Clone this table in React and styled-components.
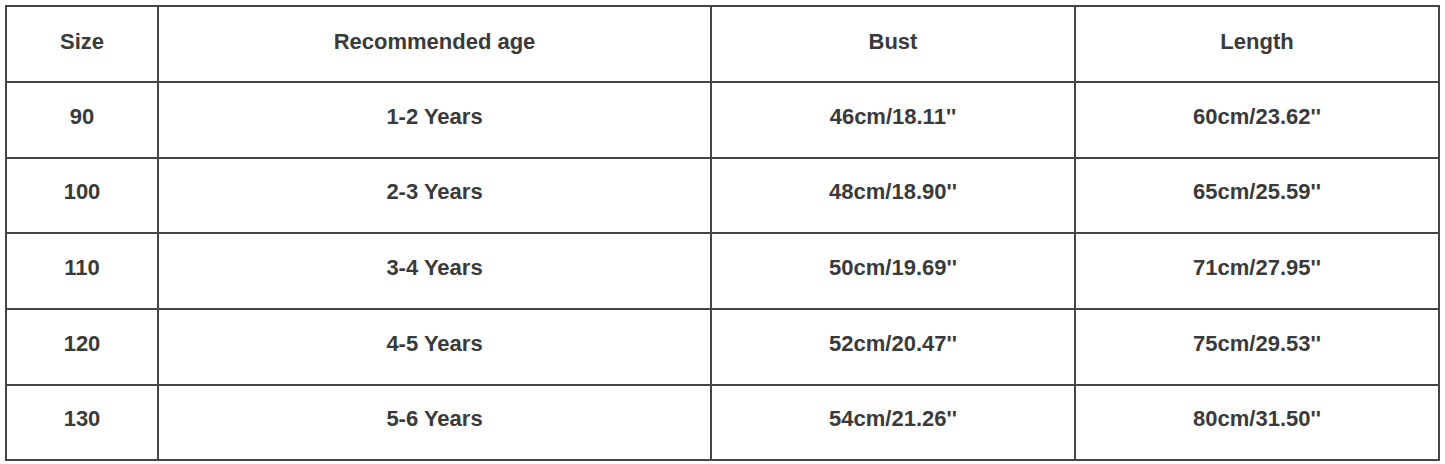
import styled, { createGlobalStyle } from "styled-components";

const GlobalStyle = createGlobalStyle`
  html, body {
    margin: 0;
    padding: 0;
    background: #ffffff;
  }
  body {
    font-family: "Liberation Sans", Arial, sans-serif;
  }
`;

const Page = styled.div`
  padding: 5px 0 0 5px;
  width: 1445px;
  height: 464px;
  box-sizing: border-box;
`;

const Table = styled.table`
  border-collapse: collapse;
  table-layout: fixed;
  width: 1434px;
  color: #3a3a3a;
  font-size: 22px;
  font-weight: bold;
`;

const Row = styled.tr`
  height: ${(props) => props.$height}px;
`;

const Cell = styled.td`
  border: 2px solid #454545;
  text-align: center;
  vertical-align: middle;
  padding: 0 0 ${(props) => (props.$head ? 4 : 7)}px;
`;

const columns = [152, 553, 364, 364];

const header = ["Size", "Recommended age", "Bust", "Length"];

const sizes = [
  ["90", "1-2 Years", "46cm/18.11''", "60cm/23.62''"],
  ["100", "2-3 Years", "48cm/18.90''", "65cm/25.59''"],
  ["110", "3-4 Years", "50cm/19.69''", "71cm/27.95''"],
  ["120", "4-5 Years", "52cm/20.47''", "75cm/29.53''"],
  ["130", "5-6 Years", "54cm/21.26''", "80cm/31.50''"],
];

const heights = [76, 76, 75, 76, 76, 75];

function App() {
  return (
    <Page>
      <GlobalStyle />
      <Table>
        <colgroup>
          {columns.map((w, i) => (
            <col key={i} style={{ width: w }} />
          ))}
        </colgroup>
        <tbody>
          <Row $height={heights[0]}>
            {header.map((h) => (
              <Cell key={h} $head>
                {h}
              </Cell>
            ))}
          </Row>
          {sizes.map((row, i) => (
            <Row key={row[0]} $height={heights[i + 1]}>
              {row.map((value, j) => (
                <Cell key={j}>{value}</Cell>
              ))}
            </Row>
          ))}
        </tbody>
      </Table>
    </Page>
  );
}

export default App;
